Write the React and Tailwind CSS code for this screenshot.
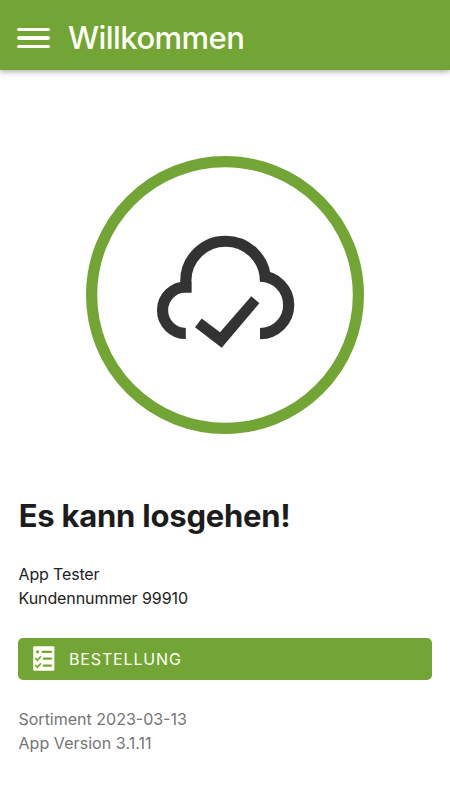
import React from 'react';

const CloudDoneIcon = () => (
    <svg className="w-[278px] h-[278px]" viewBox="0 0 278 278" fill="none">
        <circle cx="139" cy="139" r="133.4" stroke="#72a536" strokeWidth="11.2" />
        <g stroke="#333333" strokeWidth="11.2">
            <path d="M99.8 136.5V125A39.8 39.8 0 0 1 179.4 125" />
            <path d="M105.4 131H99.8A23.2 23.2 0 0 0 99.8 177.5" />
            <path d="M174 120.2A28.7 28.7 0 0 1 174 177.6" />
        </g>
        <path d="M115.7 162.5L134 176.3L165.3 140.2L173.4 147.2L135.7 191.7L109 171.2Z" fill="#333333" />
    </svg>
);

const ChecklistIcon = () => (
    <svg className="w-[22px] h-[25px]" viewBox="0 0 22 25" fill="none">
        <rect x="0.2" y="0.2" width="21.2" height="24.5" rx="1" fill="#fffff5" />
        <circle cx="4.7" cy="5.8" r="1.6" fill="#72a536" />
        <g stroke="#72a536" strokeWidth="2.2" strokeLinecap="round">
            <path d="M9.5 5.8H18M10.8 12.6H18M10.8 19.6H18" />
            <path d="M2.6 12.5L4.4 14.2L7.5 10.8M2.6 19.5L4.4 21.2L7.5 17.8" strokeWidth="1.7" />
        </g>
    </svg>
);

const App = () => {
    return (
        <div className="w-full h-[800px] bg-[#fefefe] font-['Inter',sans-serif] flex flex-col overflow-hidden">
            {/* Header */}
            <header className="h-[70px] shrink-0 bg-[#72a536] flex items-center pl-[17px] pt-[6px] shadow-[0_1px_6px_rgba(0,0,0,0.4)]">
                <button className="flex flex-col gap-[5px]" aria-label="Menu">
                    <span className="block w-[33px] h-[3.5px] rounded-full bg-[#fffff5]" />
                    <span className="block w-[33px] h-[3.5px] rounded-full bg-[#fffff5]" />
                    <span className="block w-[33px] h-[3.5px] rounded-full bg-[#fffff5]" />
                </button>
                <h1 className="ml-[18px] text-[31px] leading-[40px] font-medium tracking-[-0.55px] text-[#fffff5]">Willkommen</h1>
            </header>

            {/* Status */}
            <div className="flex justify-center pt-[85.5px]">
                <CloudDoneIcon />
            </div>

            {/* Account */}
            <main className="px-[18px] pt-[62.5px] flex flex-col">
                <h2 className="pl-[0.7px] text-[31px] leading-[40px] font-bold tracking-[-0.23px] text-[#1c1c1c]">Es kann losgehen!</h2>
                <div className="mt-[26px] pl-[0.5px] text-[16px] leading-[24px] tracking-[-0.08px] text-[#222222]">
                    <p className="tracking-[-0.15px]">App Tester</p>
                    <p>Kundennummer 99910</p>
                </div>
                <button className="mt-[28.4px] h-[41.2px] rounded-[5px] bg-[#72a536] flex items-center pl-[15px] text-[#fffff5] text-[16px] tracking-[0.85px]">
                    <ChecklistIcon />
                    <span className="ml-[14px]">BESTELLUNG</span>
                </button>
                <div className="mt-[27px] pl-[0.5px] text-[16px] leading-[24px] text-[#757575]">
                    <p>Sortiment 2023-03-13</p>
                    <p className="tracking-[0.06px]">App Version 3.1.11</p>
                </div>
            </main>
        </div>
    );
};

export default App;
